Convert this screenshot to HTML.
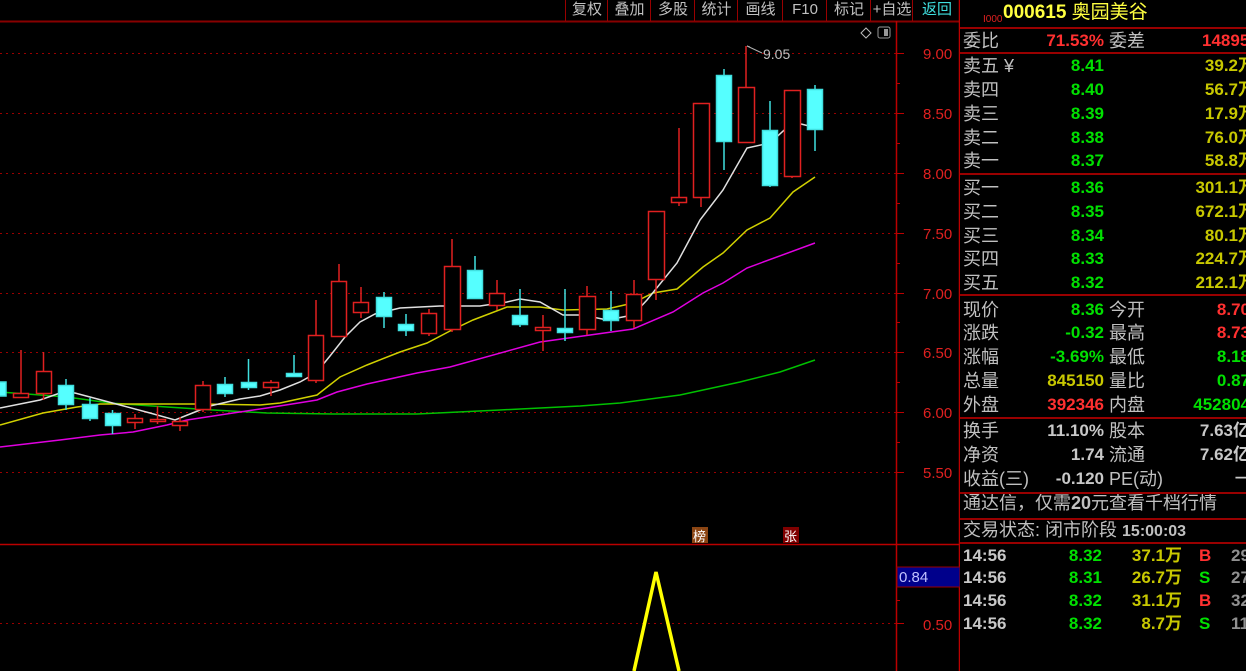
<!DOCTYPE html>
<html><head><meta charset="utf-8"><style>
body{margin:0;background:#000;width:1246px;height:671px;overflow:hidden;position:relative;font-family:"Liberation Sans","Noto Sans CJK SC",sans-serif}
.tb{position:absolute;top:0;height:21px;line-height:20px;font-size:15px;color:#c0c0c0;text-align:center;border-left:1px solid #900}
.r{position:absolute;height:24px;line-height:24px;font-size:18px;white-space:nowrap}
.l{color:#c0c0c0;left:963px}
.n{font-weight:bold;font-size:17px}
.g{color:#00e000}.y{color:#c8c800}.rd{color:#ff3030}.w{color:#c8c8c8}
.hl{position:absolute;left:960px;width:286px;height:2px;background:#900}
</style></head><body>
<svg width="960" height="671" style="position:absolute;left:0;top:0">
<line x1="0" y1="21.5" x2="960" y2="21.5" stroke="#800" stroke-width="2"/>
<g stroke="#900" stroke-dasharray="2,4" stroke-width="1">
<line x1="0" y1="53.5" x2="896" y2="53.5"/><line x1="0" y1="113.5" x2="896" y2="113.5"/><line x1="0" y1="173.5" x2="896" y2="173.5"/><line x1="0" y1="233.5" x2="896" y2="233.5"/><line x1="0" y1="293.5" x2="896" y2="293.5"/><line x1="0" y1="352.5" x2="896" y2="352.5"/><line x1="0" y1="412.5" x2="896" y2="412.5"/><line x1="0" y1="472.5" x2="896" y2="472.5"/><line x1="0" y1="623.5" x2="896" y2="623.5"/>
</g>
<line x1="896.5" y1="21" x2="896.5" y2="671" stroke="#b00" stroke-width="1.5"/>
<line x1="0" y1="544.5" x2="960" y2="544.5" stroke="#b00" stroke-width="1.5"/>
<line x1="959.5" y1="0" x2="959.5" y2="671" stroke="#b00" stroke-width="1.5"/>
<g stroke="#b00"><line x1="896" y1="53.5" x2="904" y2="53.5"/><line x1="896" y1="83.5" x2="900" y2="83.5"/><line x1="896" y1="113.5" x2="904" y2="113.5"/><line x1="896" y1="143.5" x2="900" y2="143.5"/><line x1="896" y1="173.5" x2="904" y2="173.5"/><line x1="896" y1="203.5" x2="900" y2="203.5"/><line x1="896" y1="233.5" x2="904" y2="233.5"/><line x1="896" y1="263.5" x2="900" y2="263.5"/><line x1="896" y1="293.5" x2="904" y2="293.5"/><line x1="896" y1="322.5" x2="900" y2="322.5"/><line x1="896" y1="352.5" x2="904" y2="352.5"/><line x1="896" y1="382.5" x2="900" y2="382.5"/><line x1="896" y1="412.5" x2="904" y2="412.5"/><line x1="896" y1="442.5" x2="900" y2="442.5"/><line x1="896" y1="472.5" x2="904" y2="472.5"/><line x1="896" y1="600.5" x2="900" y2="600.5"/><line x1="896" y1="623.5" x2="904" y2="623.5"/></g>
<g fill="#e02020" font-family="Liberation Sans" font-size="15"><text x="923" y="59">9.00</text><text x="923" y="119">8.50</text><text x="923" y="179">8.00</text><text x="923" y="239">7.50</text><text x="923" y="299">7.00</text><text x="923" y="358">6.50</text><text x="923" y="418">6.00</text><text x="923" y="478">5.50</text><text x="923" y="630">0.50</text><text x="923" y="578">1.00</text></g>
<rect x="897" y="567" width="63" height="20" fill="#00008b" stroke="#900"/>
<text x="899" y="582" fill="#c0c0ff" font-family="Liberation Sans" font-size="15">0.84</text>
<polyline fill="none" stroke="#00c000" stroke-width="1.5" points="0,392 67,397 110,403 167,407 213,410 267,413 333,414 417,414 500,410 580,406 620,403 680,395 740,382 780,372 815,360"/>
<polyline fill="none" stroke="#e000e0" stroke-width="1.5" points="0,447 60,440 100,435 133,432 167,425 187,420 233,413 267,408 317,400 337,392 367,384 417,373 450,367 540,342 633,329 673,312 703,293 723,283 747,268 815,243"/>
<polyline fill="none" stroke="#d0d000" stroke-width="1.5" points="0,425 43,413 77,407 100,404 133,404 200,404 260,405 280,403 317,395 340,377 367,365 400,352 427,343 450,331 473,320 507,307 540,307 563,310 607,309 633,303 653,293 677,289 703,267 723,253 747,230 770,218 793,192 815,177"/>
<polyline fill="none" stroke="#e0e0e0" stroke-width="1.5" points="0,408 40,400 60,393 75,393 90,397 120,405 150,413 175,420 190,414 210,406 240,399 260,396 280,390 300,382 316,373 330,356 345,337 360,322 375,314 400,308 440,306 480,306 507,302 520,299 540,302 563,315 583,315 607,320 633,315 647,300 677,263 700,220 723,190 747,148 770,143 793,122 813,127"/>
<g stroke="#e02020" stroke-width="1.5" fill="#000">
<line x1="21" y1="350" x2="21" y2="393"/><rect x="13.5" y="393.5" width="15" height="4"/>
<line x1="43.5" y1="352" x2="43.5" y2="400"/><rect x="36.5" y="371.5" width="15" height="22"/>
<line x1="135" y1="414" x2="135" y2="429"/><rect x="127.5" y="418.5" width="15" height="4"/>
<line x1="157.5" y1="406" x2="157.5" y2="424"/><rect x="150.5" y="419.5" width="15" height="2"/>
<line x1="180" y1="417" x2="180" y2="431"/><rect x="172.5" y="421.5" width="15" height="4"/>
<line x1="203" y1="381" x2="203" y2="412"/><rect x="195.5" y="385.5" width="15" height="24"/>
<line x1="271" y1="380" x2="271" y2="396"/><rect x="263.5" y="382.5" width="15" height="5"/>
<line x1="316" y1="300" x2="316" y2="383"/><rect x="308.5" y="335.5" width="15" height="45"/>
<line x1="339" y1="264" x2="339" y2="336"/><rect x="331.5" y="281.5" width="15" height="55"/>
<line x1="361" y1="287" x2="361" y2="318"/><rect x="353.5" y="302.5" width="15" height="10"/>
<line x1="429" y1="309" x2="429" y2="336"/><rect x="421.5" y="313.5" width="15" height="20"/>
<line x1="452" y1="239" x2="452" y2="332"/><rect x="444.5" y="266.5" width="16" height="63"/>
<line x1="497" y1="280" x2="497" y2="310"/><rect x="489.5" y="293.5" width="15" height="12"/>
<line x1="543" y1="315" x2="543" y2="351"/><rect x="535.5" y="327.5" width="15" height="3"/>
<line x1="587" y1="286" x2="587" y2="335"/><rect x="579.5" y="296.5" width="16" height="33"/>
<line x1="634" y1="280" x2="634" y2="328"/><rect x="626.5" y="294.5" width="15" height="26"/>
<line x1="656" y1="279" x2="656" y2="300"/><rect x="648.5" y="211.5" width="16" height="68"/>
<line x1="679" y1="128" x2="679" y2="206"/><rect x="671.5" y="197.5" width="15" height="5"/>
<line x1="701" y1="197" x2="701" y2="207"/><rect x="693.5" y="103.5" width="16" height="94"/>
<line x1="746" y1="46" x2="746" y2="87"/><rect x="738.5" y="87.5" width="16" height="55"/>
<line x1="792" y1="176" x2="792" y2="178"/><rect x="784.5" y="90.5" width="16" height="86"/>
</g>
<g stroke="#40e0e0" stroke-width="1.5" fill="#55ffff">
<rect x="-2" y="382" width="8" height="14"/>
<line x1="66" y1="379" x2="66" y2="410"/><rect x="58.5" y="385.5" width="15" height="19"/>
<line x1="90" y1="398" x2="90" y2="421"/><rect x="82.5" y="404.5" width="15" height="14"/>
<line x1="112.5" y1="410" x2="112.5" y2="434"/><rect x="105.5" y="413.5" width="15" height="12"/>
<line x1="225" y1="377" x2="225" y2="397"/><rect x="217.5" y="384.5" width="15" height="9"/>
<line x1="248.5" y1="359" x2="248.5" y2="390"/><rect x="241.5" y="382.5" width="15" height="5"/>
<line x1="294" y1="355" x2="294" y2="377"/><rect x="286.5" y="373.5" width="15" height="3"/>
<line x1="384" y1="292" x2="384" y2="328"/><rect x="376.5" y="297.5" width="15" height="19"/>
<line x1="406" y1="314" x2="406" y2="336"/><rect x="398.5" y="324.5" width="15" height="6"/>
<line x1="475" y1="256" x2="475" y2="299"/><rect x="467.5" y="270.5" width="15" height="28"/>
<line x1="520" y1="289" x2="520" y2="327"/><rect x="512.5" y="315.5" width="15" height="9"/>
<line x1="565" y1="289" x2="565" y2="341"/><rect x="557.5" y="328.5" width="15" height="4"/>
<line x1="611" y1="291" x2="611" y2="331"/><rect x="603.5" y="310.5" width="15" height="10"/>
<line x1="724" y1="69" x2="724" y2="170"/><rect x="716.5" y="75.5" width="15" height="66"/>
<line x1="770" y1="101" x2="770" y2="187"/><rect x="762.5" y="130.5" width="15" height="55"/>
<line x1="815" y1="85" x2="815" y2="151"/><rect x="807.5" y="89.5" width="15" height="40"/>
</g>
<path d="M747 46 L750 47 M747 46 L762 53" stroke="#b0b0b0" fill="none"/>
<text x="763" y="59" fill="#c0c0c0" font-family="Liberation Sans" font-size="14">9.05</text>
<path d="M861 33 L866 28 L871 33 L866 38 Z" stroke="#bbb" fill="none"/>
<rect x="878" y="27" width="12" height="11" rx="2" stroke="#999" fill="none"/><rect x="884" y="29" width="4" height="7" fill="#999"/>
<polyline points="634,671 656,572 679,671" fill="none" stroke="#ffff00" stroke-width="3.5"/>
<rect x="692" y="527" width="16" height="16" fill="#8b4513"/><text x="693" y="541" font-size="13" fill="#fff" font-family="Noto Sans CJK SC">榜</text>
<rect x="783" y="527" width="16" height="16" fill="#800000"/><text x="784" y="541" font-size="13" fill="#fff" font-family="Noto Sans CJK SC">张</text>
</svg>
<div class="tb" style="left:565px;width:42px">复权</div>
<div class="tb" style="left:607px;width:43px">叠加</div>
<div class="tb" style="left:650px;width:44px">多股</div>
<div class="tb" style="left:694px;width:43px">统计</div>
<div class="tb" style="left:737px;width:45px">画线</div>
<div class="tb" style="left:782px;width:44px">F10</div>
<div class="tb" style="left:826px;width:44px">标记</div>
<div class="tb" style="left:870px;width:42px">+自选</div>
<div class="tb" style="left:912px;width:48px;color:#40e0e0">返回</div>
<div style="position:absolute;left:983px;top:14px;font-size:10px;color:#e02020">I000</div>
<div class="r y" style="left:1003px;top:1px;font-size:19px;color:#ffff40"><b>000615</b> 奥园美谷</div>
<div class="hl" style="top:27px"></div>
<div class="r l" style="top:29px">委比</div><div class="r n rd" style="left:1000px;width:104px;text-align:right;top:29px">71.53%</div>
<div class="r" style="left:1109px;top:29px;color:#c0c0c0">委差</div><div class="r n rd" style="left:1202px;top:29px">14895</div>
<div class="hl" style="top:52px"></div>
<div id="rows"></div>
<div class="hl" style="top:173px"></div>
<div class="hl" style="top:294px"></div>
<div class="hl" style="top:417px"></div>
<div class="hl" style="top:492px"></div>
<div class="hl" style="top:518px"></div>
<div class="hl" style="top:542px"></div>
<script>
function R(y,l,v,c,v2,c2,w2){return '<div class="r l" style="top:'+(y-12)+'px">'+l+'</div><div class="r n '+c+'" style="left:1000px;width:104px;text-align:right;top:'+(y-12)+'px">'+v+'</div>'+(v2!==undefined?'<div class="r n '+c2+'" style="left:1110px;width:'+(w2||136)+'px;text-align:right;top:'+(y-12)+'px">'+v2+'</div>':'');}
var h='';
var s=[['卖五 ¥','8.41','39.2万'],['卖四','8.40','56.7万'],['卖三','8.39','17.9万'],['卖二','8.38','76.0万'],['卖一','8.37','58.8万'],['买一','8.36','301.1万'],['买二','8.35','672.1万'],['买三','8.34','80.1万'],['买四','8.33','224.7万'],['买五','8.32','212.1万']];
var ys=[66,90,114,138,161,188,212,236,259,283];
s.forEach(function(a,i){h+=R(ys[i],a[0],a[1],'g',a[2],'y',145)});
function Q(y,l,v,c,l2,v2,c2){return R(y,l,v,c)+'<div class="r" style="left:1109px;top:'+(y-12)+'px;color:#c0c0c0">'+l2+'</div><div class="r n '+c2+'" style="left:1150px;width:100px;text-align:right;top:'+(y-12)+'px">'+v2+'</div>';}
h+=Q(310,'现价','8.36','g','今开','8.70','rd');
h+=Q(333,'涨跌','-0.32','g','最高','8.73','rd');
h+=Q(357,'涨幅','-3.69%','g','最低','8.18','g');
h+=Q(381,'总量','845150','y','量比','0.87','g');
h+=Q(405,'外盘','392346','rd','内盘','452804','g');
h+=Q(431,'换手','11.10%','w','股本','7.63亿','w');
h+=Q(455,'净资','1.74','w','流通','7.62亿','w');
h+=Q(479,'收益(三)','-0.120','w','PE(动)','－ ','w');
h+='<div class="r l" style="top:491px">通达信，仅需<b>20</b>元查看千档行情</div>';
h+='<div class="r l" style="top:518px">交易状态: 闭市阶段 <b style="font-size:16px">15:00:03</b></div>';
var t=[['8.32','37.1万','B','rd','29'],['8.31','26.7万','S','g','27'],['8.32','31.1万','B','rd','32'],['8.32','8.7万','S','g','11']];
[556,578,601,624].forEach(function(y,i){var a=t[i];h+='<div class="r n w" style="left:963px;top:'+(y-12)+'px">14:56</div><div class="r n g" style="left:1040px;width:62px;text-align:right;top:'+(y-12)+'px">'+a[0]+'</div><div class="r n y" style="left:1100px;width:82px;text-align:right;top:'+(y-12)+'px">'+a[1]+'</div><div class="r n '+a[3]+'" style="left:1199px;top:'+(y-12)+'px">'+a[2]+'</div><div class="r n" style="left:1231px;top:'+(y-12)+'px;color:#909090">'+a[4]+'</div>';});
document.getElementById('rows').innerHTML=h;
</script>
</body></html>
